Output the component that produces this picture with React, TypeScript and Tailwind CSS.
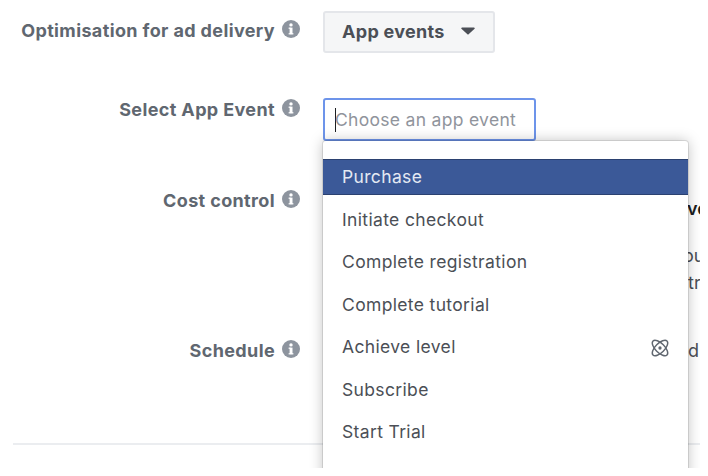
const labelFont = "font-['Inter','Liberation_Sans',sans-serif]";

function InfoIcon() {
  return (
    <svg viewBox="0 0 18 18" className="h-[18px] w-[18px] shrink-0">
      <circle cx="9" cy="9" r="9" fill="#8d949e" />
      <rect x="7.6" y="7.6" width="2.9" height="6.6" fill="#fff" />
      <rect x="6.6" y="7.6" width="2" height="1.2" fill="#fff" />
      <rect x="6.6" y="13.2" width="4.8" height="1.2" fill="#fff" />
      <circle cx="9" cy="4.9" r="1.7" fill="#fff" />
    </svg>
  );
}

function AtomIcon() {
  return (
    <svg viewBox="0 0 20 20" className="h-[22px] w-[22px]" fill="none" stroke="#606770" strokeWidth="1.3">
      <ellipse cx="10" cy="10" rx="4.2" ry="9" transform="rotate(45 10 10)" />
      <ellipse cx="10" cy="10" rx="4.2" ry="9" transform="rotate(-45 10 10)" />
      <circle cx="10" cy="10" r="1.5" fill="#606770" stroke="none" />
    </svg>
  );
}

function FieldLabel({ children }: { children: string }) {
  return (
    <div className="flex w-[300px] shrink-0 items-start justify-end gap-[7px]">
      <span className="text-[18px] leading-[22px] font-bold tracking-[0.37px] text-[#606770]">{children}</span>
      <InfoIcon />
    </div>
  );
}

const events = [
  "Purchase",
  "Initiate checkout",
  "Complete registration",
  "Complete tutorial",
  "Achieve level",
  "Subscribe",
  "Start Trial",
];

export default function App() {
  return (
    <main className={`relative h-[468px] w-[700px] overflow-hidden bg-white ${labelFont}`}>
      <div className="flex flex-col pt-[11px]">
        {/* Optimisation */}
        <div className="flex h-[87px] gap-[23px]">
          <div className="pt-[9px]">
            <FieldLabel>Optimisation for ad delivery</FieldLabel>
          </div>
          <button className="flex h-[42px] w-[172px] items-center gap-[16px] rounded-[3px] border-2 border-[#e4e6ea] bg-[#f5f6f7] pb-[2px] pl-[17px] text-[18px] font-bold tracking-[0.3px] text-[#4b4f56]">
            App events
            <svg viewBox="0 0 14 8" className="h-[8px] w-[14px]">
              <path d="M1 0.5h12a0.8 0.8 0 0 1 0.6 1.3L7.6 7.3a0.9 0.9 0 0 1-1.2 0L0.4 1.8A0.8 0.8 0 0 1 1 0.5z" fill="#4b4f56" />
            </svg>
          </button>
        </div>

        {/* App event */}
        <div className="flex h-[92px] gap-[23px]">
          <div className="pt-[1px]">
            <FieldLabel>Select App Event</FieldLabel>
          </div>
          <div className="flex h-[43px] w-[213px] items-center rounded-[3px] border-2 border-[#6d94ea] pl-[10px] text-[17.5px] tracking-[0.3px] text-[#90949c]">
            <span className="mr-[-1px] h-[24px] w-[1px] bg-[#1c1e21]" />
            <span className="pt-[2px]">Choose an app event</span>
          </div>
        </div>

        {/* Cost control */}
        <div className="flex h-[150px] gap-[23px]">
          <FieldLabel>Cost control</FieldLabel>
          <div className="pt-[5px] text-[18px] leading-[27px] text-[#4b4f56]">
            <div className="pl-[364px] font-semibold text-[#1c1e21]">ve</div>
            <div className="mt-[20px] pl-[360px]">ou</div>
            <div className="pl-[365px]">tr</div>
          </div>
        </div>

        {/* Schedule */}
        <div className="flex h-[103px] gap-[23px]">
          <FieldLabel>Schedule</FieldLabel>
          <div className="pl-[365px] text-[18px] leading-[22px] text-[#4b4f56]">d</div>
        </div>

        <div className="ml-[13px] h-[2px] bg-[#ebedf0]" />
      </div>

      {/* Dropdown menu */}
      <div className="absolute top-[141px] left-[323px] h-[345px] w-[365px] rounded-t-[3px] bg-white pt-[18px] shadow-[0_0_0_1px_rgba(0,0,0,0.1),0_0_14px_rgba(0,0,0,0.25)]">
        {events.map((name, i) => (
          <div
            key={name}
            className={
              i === 0
                ? "flex h-[36px] items-center border-y border-[#2b4170] bg-[#3b5998] px-[19px] pt-[1px] text-[17.5px] tracking-[0.35px] text-[#e4e9f3]"
                : "mt-[6.5px] flex h-[36px] items-center justify-between pt-[1px] pr-[17px] pl-[19px] text-[17.5px] tracking-[0.35px] text-[#4b4f56]"
            }
          >
            {name}
            {name === "Achieve level" && <AtomIcon />}
          </div>
        ))}
      </div>
    </main>
  );
}
